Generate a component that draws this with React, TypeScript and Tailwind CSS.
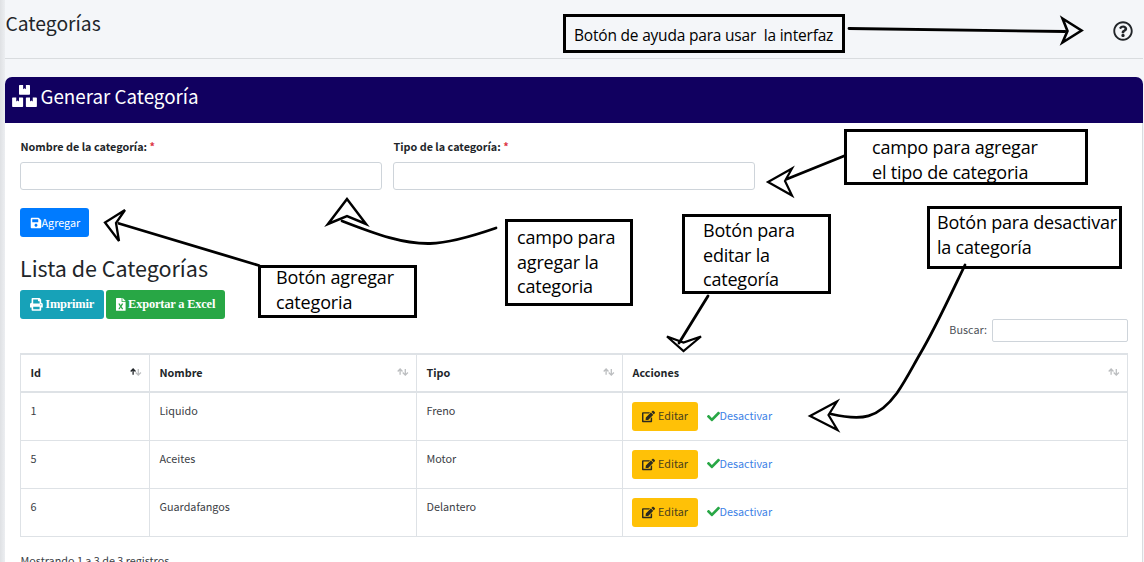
import type { ReactNode } from "react";
import {
  FaBoxes,
  FaCheck,
  FaEdit,
  FaFileExcel,
  FaPrint,
  FaRegQuestionCircle,
  FaSave,
} from "react-icons/fa";

const rows = [
  { id: 1, nombre: "Liquido", tipo: "Freno" },
  { id: 5, nombre: "Aceites", tipo: "Motor" },
  { id: 6, nombre: "Guardafangos", tipo: "Delantero" },
];

function SortArrows({ active = false }: { active?: boolean }) {
  return (
    <svg width="13" height="10" viewBox="0 0 13 10" fill="none" strokeWidth="1.3">
      <path d="M3.1 7.8V2.3M0.7 4.5L3.1 2L5.5 4.5" stroke={active ? "#212529" : "#bcbec0"} />
      <path d="M8.3 1.9V7.8M5.7 5.5L8.3 8.1L10.9 5.5" stroke="#bcbec0" />
    </svg>
  );
}

function HeaderCell({ label, width, active }: { label: string; width: string; active?: boolean }) {
  return (
    <th className={`${width} h-[38px] border-x border-t-2 border-b-2 border-[#dee2e6] p-0 pb-[2px] text-left font-bold`}>
      <div className="flex items-center justify-between pr-[6px] pl-[9.5px]">
        <span>{label}</span>
        <SortArrows active={active} />
      </div>
    </th>
  );
}

function Field({ label }: { label: string }) {
  return (
    <label className="flex w-[362px] flex-col">
      <span className="h-[22px] pl-[0.5px] leading-[19px] font-bold whitespace-nowrap">
        {label} <span className="text-[#dc3545]">*</span>
      </span>
      <input className="mt-[3px] h-[28px] rounded-[3px] border border-[#ced4da] bg-white" />
    </label>
  );
}

function Note({ place, children }: { place: string; children: ReactNode }) {
  return (
    <div
      className={`absolute border-[3px] border-black font-['Open_Sans','Noto_Sans',sans-serif] font-normal whitespace-pre text-black ${place}`}
    >
      {children}
    </div>
  );
}

export default function App() {
  return (
    <div className="relative h-[562px] w-[1144px] overflow-hidden bg-[#f4f6f9] font-['Noto_Sans_CJK_SC',sans-serif] text-[10.8px] text-[#212529]">
      <div className="flex h-full">
        <div className="w-[5px] shrink-0 bg-linear-to-r from-[#dfe1e4] to-[#eceef1]" />
        <main className="flex h-full w-[1138px] flex-col">
          <header className="flex h-[59px] items-start justify-between border-b border-[#d9dcdf] pr-[10px] pl-[0.5px]">
            <h1 className="mt-[8px] text-[19.3px] leading-[30px]">Categorías</h1>
            <FaRegQuestionCircle className="mt-[21px] text-[20px]" />
          </header>
          <section className="mt-[18px] flex min-h-0 flex-1 flex-col">
            <div className="flex h-[46px] shrink-0 items-start rounded-t-[7px] bg-[#110060] pl-[7px] text-white">
              <FaBoxes className="mt-[8px] h-[22px] w-[25px]" />
              <h2 className="mt-[5px] ml-[3.5px] text-[18.8px] leading-[28px]">Generar Categoría</h2>
            </div>
            <div className="flex-1 border-r border-[#d9dcdf] bg-white pt-[14px] pr-[14px] pl-[15px]">
              <div className="flex gap-[11px]">
                <Field label="Nombre de la categoría:" />
                <Field label="Tipo de la categoría:" />
              </div>
              <button className="mt-[18px] flex h-[29px] w-[69px] items-center rounded-[3px] bg-[#007bff] pl-[10px] text-white">
                <FaSave className="text-[12px]" />
                <span className="-ml-[0.5px]">Agregar</span>
              </button>
              <h3 className="mt-[16px] h-[31px] text-[21.5px] leading-[30px]">Lista de Categorías</h3>
              <div className="mt-[6px] flex gap-[2px] font-['Liberation_Serif',serif] text-[12.4px] font-bold tracking-[-0.18px] text-white">
                <button className="flex h-[29px] w-[84px] items-center gap-[2.5px] rounded-[3px] bg-[#17a2b8] pl-[10px]">
                  <FaPrint className="text-[12.8px]" />
                  Imprimir
                </button>
                <button className="flex h-[29px] w-[119px] items-center gap-[2.5px] rounded-[3px] bg-[#28a745] pl-[10px] whitespace-nowrap">
                  <FaFileExcel className="w-[9.6px] text-[12.8px]" />
                  Exportar a Excel
                </button>
              </div>
              <label className="flex h-[23px] items-center justify-end gap-[5px] text-[#4c5157]">
                <span className="-mt-[2px]">Buscar:</span>
                <input className="h-[23px] w-[136px] rounded-[2px] border border-[#ced4da] bg-white" />
              </label>
              <table className="mt-[11px] w-[1107px] table-fixed border-collapse">
                <thead>
                  <tr>
                    <HeaderCell label="Id" width="w-[129px]" active />
                    <HeaderCell label="Nombre" width="w-[267px]" />
                    <HeaderCell label="Tipo" width="w-[206px]" />
                    <HeaderCell label="Acciones" width="w-[505px]" />
                  </tr>
                </thead>
                <tbody>
                  {rows.map((row) => (
                    <tr key={row.id} className="h-[48px] align-top text-[#3b4045]">
                      <td className="border border-[#dee2e6] px-[9.5px] pt-[8px] leading-[18px]">{row.id}</td>
                      <td className="border border-[#dee2e6] px-[9.5px] pt-[8px] leading-[18px]">{row.nombre}</td>
                      <td className="border border-[#dee2e6] px-[9.5px] pt-[8px] leading-[18px]">{row.tipo}</td>
                      <td className="border border-[#dee2e6] p-0 pt-[9px] pl-[9px]">
                        <div className="flex items-center">
                          <button className="flex h-[29px] w-[66px] items-center gap-[3px] rounded-[3px] bg-[#ffc107] pl-[10px] text-[#4a3f1d]">
                            <FaEdit className="text-[13px] text-[#2c2a20]" />
                            <span className="-mt-[2px]">Editar</span>
                          </button>
                          <FaCheck className="-mt-[1px] ml-[9px] text-[13px] text-[#28a745]" />
                          <a className="-mt-[2px] -ml-[0.5px] text-[#3d82e6]">Desactivar</a>
                        </div>
                      </td>
                    </tr>
                  ))}
                </tbody>
              </table>
              <p className="mt-[14px] pl-[0.5px] leading-[18px] text-[#3b4045]">Mostrando 1 a 3 de 3 registros</p>
            </div>
          </section>
        </main>
      </div>

      <Note place="left-[563px] top-[14px] h-[39px] w-[282px] pt-[6px] pl-[8px] text-[15.5px] leading-[24px] tracking-[-0.2px]">
        {"Botón de ayuda para usar  la interfaz"}
      </Note>
      <Note place="left-[844px] top-[129px] h-[56px] w-[244px] pt-[3px] pl-[25px] text-[18px] leading-[25px] tracking-[-0.2px]">
        {"campo para agregar\nel tipo de categoria"}
      </Note>
      <Note place="left-[505px] top-[219px] h-[87px] w-[128px] pt-[3px] pl-[9px] text-[18px] leading-[24.5px] tracking-[-0.2px]">
        {"campo para\nagregar la\ncategoria"}
      </Note>
      <Note place="left-[682px] top-[214px] h-[80px] w-[149px] pt-[1px] pl-[18px] text-[18px] leading-[24.5px] tracking-[-0.2px]">
        {"Botón para\neditar la\ncategoría"}
      </Note>
      <Note place="left-[927px] top-[206px] h-[63px] w-[195px] pt-[1px] pl-[7px] text-[18px] leading-[25px] tracking-[-0.2px]">
        {"Botón para desactivar\nla categoría"}
      </Note>
      <Note place="left-[258px] top-[265px] h-[53px] w-[159px] pl-[15px] text-[18px] leading-[25px] tracking-[-0.15px]">
        <div className="-mt-[3px]">{"Botón agregar\ncategoria"}</div>
      </Note>

      <svg
        className="pointer-events-none absolute inset-0"
        width="1144"
        height="562"
        fill="none"
        stroke="#000"
        strokeWidth="2.8"
        strokeLinecap="round"
      >
        <path d="M849 28.500L1065 31.500" />
        <path d="M1062.500 18.500L1081.500 30.500L1062.500 42.500L1067.500 31Z" strokeWidth="2.6" />
        <path d="M844 156L787 179" />
        <path d="M792 168.500L768 182L792 195.500L785 181Z" strokeWidth="2.2" />
        <path d="M342 221C378 235 403 244 430 243.500C448 243 470 237 496 228" />
        <path d="M347 199L328 224L347 216L366 224Z" strokeWidth="2.5" />
        <path d="M259 265.500L119 223.500" />
        <path d="M125 210L105 222.500L119 241L116 223Z" strokeWidth="2.3" />
        <path d="M708 296L679 343" />
        <path d="M667 336.500L683.500 351L701 336.500L683.500 342.500Z" strokeWidth="2.2" />
        <path d="M965 265C951 294 935 329 920 354C913 366 906 380 897 393C878 419 862 421 831 414" />
        <path d="M837 401.500L810 416L837.500 430L828.500 415Z" strokeWidth="2.2" />
      </svg>
    </div>
  );
}
